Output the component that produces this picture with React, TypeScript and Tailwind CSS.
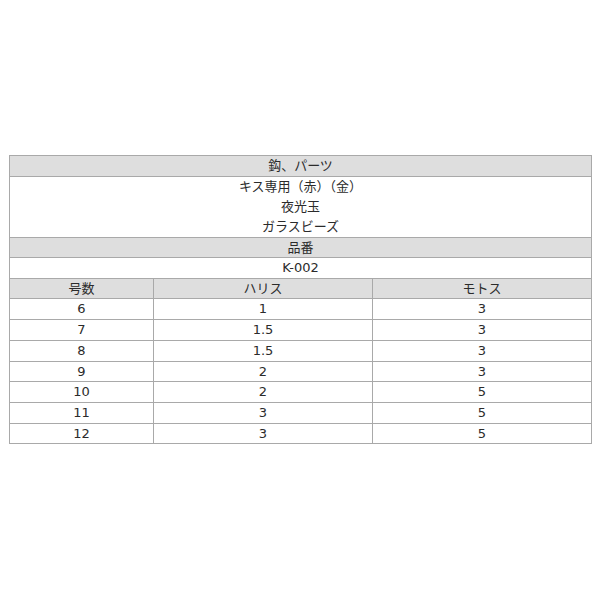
const rows: [string, string, string, string][] = [
  ['6', '1', '3', 'h-[20px]'],
  ['7', '1.5', '3', 'h-[20px]'],
  ['8', '1.5', '3', 'h-[20px]'],
  ['9', '2', '3', 'h-[19px]'],
  ['10', '2', '5', 'h-[20px]'],
  ['11', '3', '5', 'h-[20px]'],
  ['12', '3', '5', 'h-[19px]'],
]

function Row({ cells, h, head }: { cells: string[]; h: string; head?: boolean }) {
  return (
    <div className={`grid grid-cols-[143px_219px_219px] border-b border-[#a9a9a9] ${head ? 'bg-[#dedede]' : 'bg-white'}`}>
      {cells.map((c, i) => (
        <div
          key={i}
          className={`${h} flex items-center justify-center ${i > 0 ? 'border-l border-[#a9a9a9]' : ''}`}
        >
          {c}
        </div>
      ))}
    </div>
  )
}

export default function App() {
  return (
    <div className="w-[600px] h-[600px] bg-white pt-[155px] pl-[9px] text-[13px] text-[#2b2b2b] font-['DejaVu_Sans','Noto_Sans_CJK_JP',sans-serif]">
      <div className="w-[583px] border-x border-t border-[#a9a9a9]">
        <div className="h-[21px] bg-[#dedede] border-b border-[#a9a9a9] flex items-center justify-center">
          鈎、パーツ
        </div>
        <div className="h-[61px] border-b border-[#a9a9a9] flex flex-col items-center justify-center leading-[20px]">
          <div>キス専用（赤）（金）</div>
          <div>夜光玉</div>
          <div>ガラスビーズ</div>
        </div>
        <div className="h-[20px] bg-[#dedede] border-b border-[#a9a9a9] flex items-center justify-center">
          品番
        </div>
        <div className="h-[21px] border-b border-[#a9a9a9] flex items-center justify-center">
          K-002
        </div>
        <Row cells={['号数', 'ハリス', 'モトス']} h="h-[19px]" head />
        {rows.map(([a, b, c, h]) => (
          <Row key={a} cells={[a, b, c]} h={h} />
        ))}
      </div>
    </div>
  )
}
